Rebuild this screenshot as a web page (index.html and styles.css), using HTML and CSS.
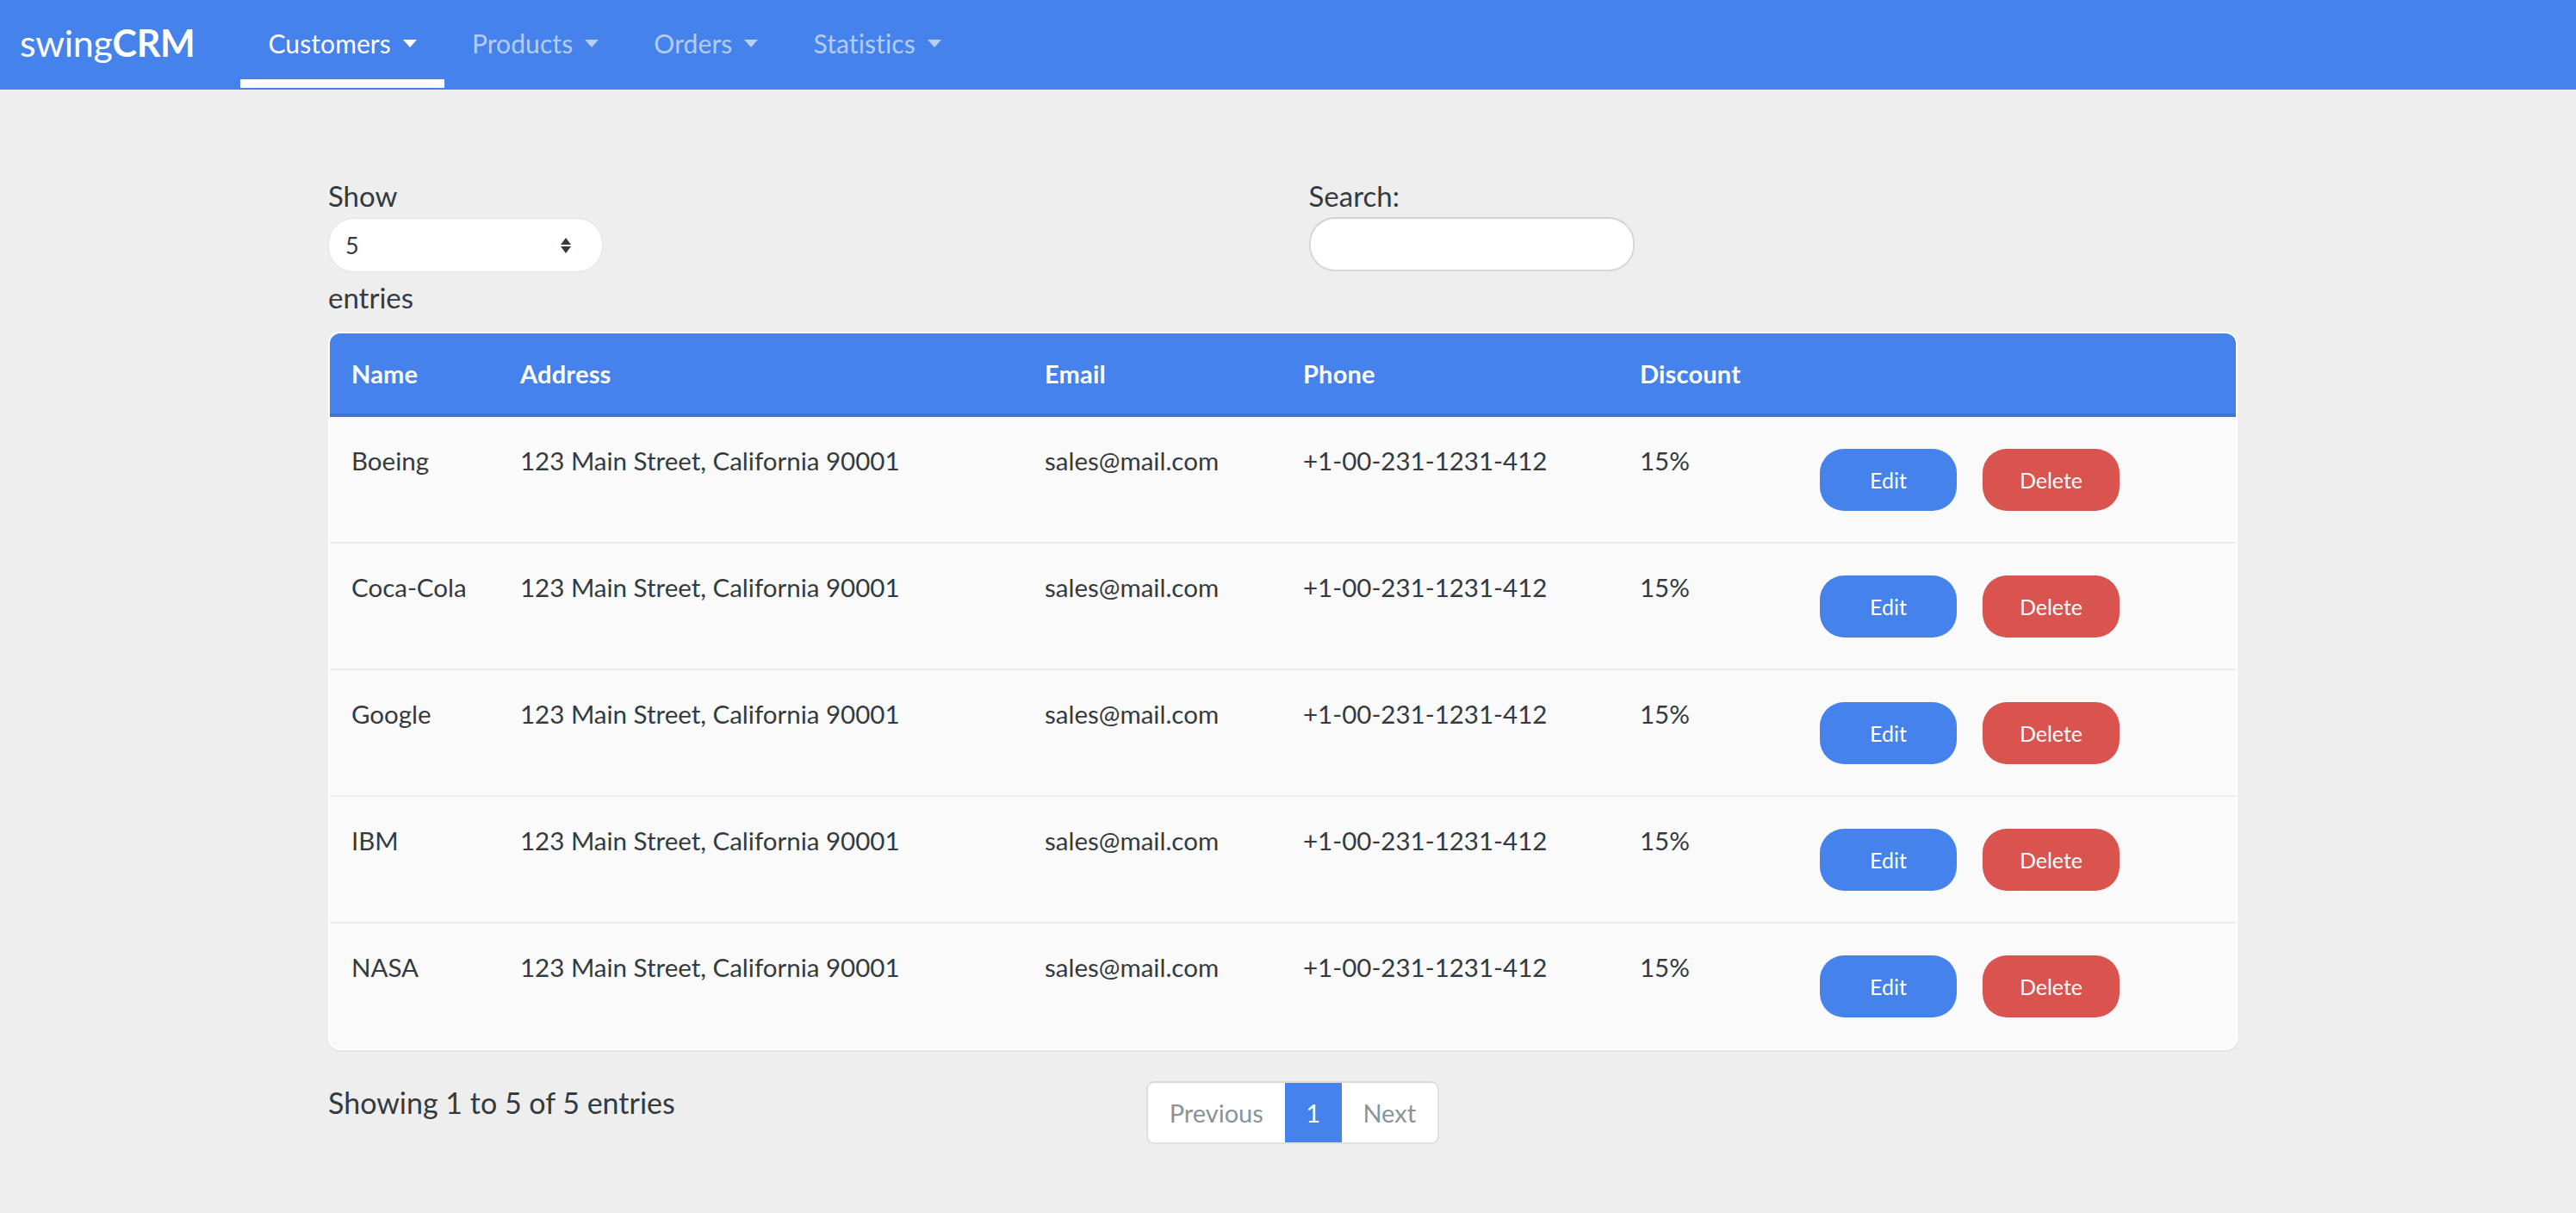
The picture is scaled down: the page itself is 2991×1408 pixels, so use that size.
FILE: index.html
```html
<!DOCTYPE html>
<html lang="en">
<head>
<meta charset="utf-8">
<title>swingCRM - Customers</title>
<link rel="stylesheet" href="styles.css">
</head>
<body>
<nav class="navbar">
  <a class="brand" href="#">swing<b>CRM</b></a>
  <ul class="nav">
    <li class="nav-item active"><span>Customers</span><i class="caret"></i></li>
    <li class="nav-item"><span>Products</span><i class="caret"></i></li>
    <li class="nav-item"><span>Orders</span><i class="caret"></i></li>
    <li class="nav-item"><span>Statistics</span><i class="caret"></i></li>
  </ul>
</nav>

<main class="container">
  <div class="controls">
    <div class="col">
      <label class="label">Show</label>
      <div class="select">
        <span>5</span>
        <svg class="updown" width="16" height="20" viewBox="0 0 16 20"><path d="M8 1 L14 9 L2 9 Z M2 11 L14 11 L8 19 Z" fill="#343a40"/></svg>
      </div>
      <div class="label">entries</div>
    </div>
    <div class="col col-right">
      <label class="label">Search:</label>
      <div class="search"></div>
    </div>
  </div>

  <table class="table">
    <colgroup>
      <col class="c-name"><col class="c-addr"><col class="c-email"><col class="c-phone"><col class="c-disc"><col>
    </colgroup>
    <thead>
      <tr><th>Name</th><th>Address</th><th>Email</th><th>Phone</th><th>Discount</th><th></th></tr>
    </thead>
    <tbody>
      <tr><td>Boeing</td><td>123 Main Street, California 90001</td><td>sales@mail.com</td><td>+1-00-231-1231-412</td><td>15%</td><td class="actions"><button class="btn btn-edit">Edit</button><button class="btn btn-del">Delete</button></td></tr>
      <tr><td>Coca-Cola</td><td>123 Main Street, California 90001</td><td>sales@mail.com</td><td>+1-00-231-1231-412</td><td>15%</td><td class="actions"><button class="btn btn-edit">Edit</button><button class="btn btn-del">Delete</button></td></tr>
      <tr><td>Google</td><td>123 Main Street, California 90001</td><td>sales@mail.com</td><td>+1-00-231-1231-412</td><td>15%</td><td class="actions"><button class="btn btn-edit">Edit</button><button class="btn btn-del">Delete</button></td></tr>
      <tr><td>IBM</td><td>123 Main Street, California 90001</td><td>sales@mail.com</td><td>+1-00-231-1231-412</td><td>15%</td><td class="actions"><button class="btn btn-edit">Edit</button><button class="btn btn-del">Delete</button></td></tr>
      <tr><td>NASA</td><td>123 Main Street, California 90001</td><td>sales@mail.com</td><td>+1-00-231-1231-412</td><td>15%</td><td class="actions"><button class="btn btn-edit">Edit</button><button class="btn btn-del">Delete</button></td></tr>
    </tbody>
  </table>

  <div class="footer">
    <div class="info">Showing 1 to 5 of 5 entries</div>
    <div class="pager-col">
      <ul class="pagination">
        <li class="page prev">Previous</li>
        <li class="page current">1</li>
        <li class="page next">Next</li>
      </ul>
    </div>
  </div>
</main>
</body>
</html>
```

FILE: styles.css
```css
* { box-sizing: border-box; }

body {
  margin: 0;
  background: #eeeeee;
  color: #343a40;
  font-family: "Segoe UI", Lato, "Open Sans", sans-serif;
  font-size: 29.5px;
}

.navbar {
  height: 104px;
  background: #4582ec;
  display: flex;
  align-items: flex-start;
}

.brand {
  color: #fff;
  text-decoration: none;
  font-size: 43px;
  line-height: 100px;
  padding-left: 23px;
  margin-right: 53px;
  letter-spacing: -0.3px;
}
.brand b { font-weight: 700; }

.nav {
  list-style: none;
  margin: 0;
  padding: 0;
  display: flex;
}

.nav-item {
  height: 102px;
  padding: 8px 32px 0;
  display: flex;
  align-items: center;
  gap: 14px;
  font-size: 30px;
  letter-spacing: 0.1px;
  color: rgba(255, 255, 255, 0.62);
  border-bottom: 10px solid transparent;
}
.nav-item.active {
  color: #fff;
  border-bottom-color: #fff;
}

.caret {
  width: 0;
  height: 0;
  border-left: 8px solid transparent;
  border-right: 8px solid transparent;
  border-top: 9px solid currentColor;
}

.container {
  width: 2217px;
  margin: 0 auto;
  padding-top: 99px;
  transform: translateX(-6px);
}

.controls {
  display: grid;
  grid-template-columns: 1fr 1fr;
}
.col-right { padding-left: 30px; }

.label {
  display: block;
  font-size: 33px;
  line-height: 48px;
}

.select {
  margin-top: 2px;
  margin-bottom: 5px;
  width: 319px;
  height: 63px;
  background: #fff;
  border: 1px solid #e2e2e2;
  border-radius: 30px;
  display: flex;
  align-items: center;
  justify-content: space-between;
  padding: 0 34px 0 19px;
  font-size: 27px;
}

.search {
  margin-top: 1px;
  width: 378px;
  height: 63px;
  background: #fff;
  border: 2px solid #d8d8d8;
  border-top-color: #d2d2d2;
  border-radius: 30px;
}

.table {
  margin-top: 16px;
  width: 100%;
  table-layout: fixed;
  border-collapse: separate;
  border-spacing: 0;
  border: 2px solid #fff;
  border-radius: 14px;
  overflow: hidden;
  background: #fafafa;
  box-shadow: 0 2px 0 #e3e3e3;
}

.c-name { width: 195px; }
.c-addr { width: 609px; }
.c-email { width: 300px; }
.c-phone { width: 391px; }
.c-disc { width: 199px; }

.table th {
  background: #4582ec;
  color: #fff;
  font-weight: 700;
  font-size: 29px;
  letter-spacing: 0.2px;
  text-align: left;
  line-height: 43px;
  padding: 25px 26px;
  border-bottom: 4px solid #3c74d5;
}
.table th:first-child { padding-left: 25px; }

.table td {
  vertical-align: top;
  line-height: 43px;
  padding: 29px 26px 0;
  border-bottom: 2px solid #ececec;
  white-space: nowrap;
}
.table td:first-child { padding-left: 25px; }
.table tbody tr:last-child td { border-bottom: 0; }

.table td.actions {
  vertical-align: middle;
  padding: 37px 36px 36px;
}

.btn {
  height: 72px;
  border: 0;
  border-radius: 28px;
  color: #fff;
  font-family: inherit;
  font-size: 25px;
  width: 159px;
  padding: 0;
}
.btn-edit { background: #4582ec; margin-right: 30px; }
.btn-del { background: #d9534f; }

.footer {
  margin-top: 36px;
  display: grid;
  grid-template-columns: 5fr 7fr;
  align-items: start;
}

.info {
  font-size: 34px;
  line-height: 48px;
  padding-top: 1px;
}

.pager-col { padding-left: 26px; }

.pagination {
  list-style: none;
  margin: 0;
  padding: 0;
  display: inline-flex;
  height: 73px;
  background: #fff;
  border: 2px solid #e0e0e0;
  border-top-color: #dadada;
  border-radius: 9px;
  overflow: hidden;
}

.page {
  display: flex;
  align-items: center;
  justify-content: center;
  color: #8a939c;
  font-size: 29px;
}
.prev { width: 159px; }
.current {
  width: 66px;
  background: #4582ec;
  color: #fff;
  margin: -2px 0;
}
.next { width: 111px; }
```
